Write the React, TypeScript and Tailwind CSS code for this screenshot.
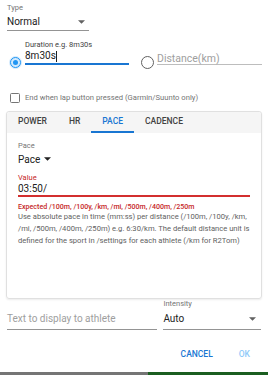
import React from "react";

const Caret = ({ className = "" }: { className?: string }) => (
  <svg width="7" height="4" viewBox="0 0 10 5" className={className}>
    <path d="M0 0 L5 5 L10 0 Z" fill="currentColor" />
  </svg>
);

const tabs = ["POWER", "HR", "PACE", "CADENCE"];

const App = () => {
  return (
    <div
      className="w-[268px] h-[375px] bg-white overflow-hidden flex flex-col text-[#212121]"
      style={{ fontFamily: "Roboto, 'Liberation Sans', sans-serif" }}
    >
      {/* Type select */}
      <div className="px-[7px] pt-[3px]">
        <div className="w-[82px]">
          <div className="text-[7.5px] leading-[10px] text-[#757575]">Type</div>
          <div className="flex items-center justify-between h-[18px] border-b border-[#949494] text-[10px] pr-[4px]">
            <span>Normal</span>
            <Caret className="text-[#616161]" />
          </div>
        </div>
      </div>

      {/* Duration / Distance */}
      <div className="flex items-start pl-[9px] mt-[9px]">
        <div className="mt-[16px] w-[13px] h-[13px] rounded-full bg-[#2196f3]/20 flex items-center justify-center">
          <div className="w-[11px] h-[11px] rounded-full border-[1.5px] border-[#2196f3] flex items-center justify-center">
            <div className="w-[5px] h-[5px] rounded-full bg-[#2196f3]" />
          </div>
        </div>
        <div className="ml-[3px] w-[104px]">
          <div className="text-[7.5px] leading-[9px] text-[#424242]">Duration e.g. 8m30s</div>
          <div className="h-[16px] border-b-2 border-[#1976d2] text-[10px] leading-[14px] flex items-center">
            8m30s<span className="w-px h-[11px] bg-[#212121]" />
          </div>
        </div>
        <div className="ml-[12px] mt-[16px] w-[13px] h-[13px] rounded-full border-[1.5px] border-[#616161]" />
        <div className="ml-[3px] w-[105px] pt-[13px]">
          <div className="h-[12px] border-b border-[#bdbdbd] text-[10.5px] leading-[12px] text-[#9e9e9e]">Distance(km)</div>
        </div>
      </div>

      {/* Checkbox */}
      <div className="flex items-center pl-[10px] mt-[23px] h-[12px]">
        <div className="w-[10px] h-[10px] rounded-[1.5px] border-[1.5px] border-[#757575]" />
        <span className="ml-[5px] text-[7.65px] text-[#757575]">End when lap button pressed (Garmin/Suunto only)</span>
      </div>

      {/* Card with tabs */}
      <div className="mx-[6px] mt-[7px] h-[188px] border border-[#e0e0e0] rounded-[3px] shadow-[0_1px_2px_rgba(0,0,0,0.08)] flex flex-col">
        <div className="flex h-[21px] bg-[#f5f5f5] rounded-t-[3px]">
          {tabs.map((t) => (
            <div
              key={t}
              className={
                t === "PACE"
                  ? "px-[11px] flex items-center text-[8.5px] font-medium text-[#1976d2] border-b-2 border-[#1976d2]"
                  : "px-[11px] flex items-center text-[8.5px] font-medium text-[#424242] border-b-2 border-transparent"
              }
            >
              {t}
            </div>
          ))}
        </div>
        <div className="px-[11px] pt-[8px]">
          <div className="text-[7.5px] leading-[9px] text-[#757575]">Pace</div>
          <div className="mt-[2px] flex items-center gap-[4px] h-[14px] text-[10px]">
            <span>Pace</span>
            <Caret className="text-[#212121]" />
          </div>
          <div className="mt-[7px] text-[7.5px] leading-[9px] text-[#c62828]">Value</div>
          <div className="h-[15px] border-b-2 border-[#d32f2f] text-[10px] leading-[13px] w-[232px]">03:50/</div>
          <div className="mt-[5px] text-[7.1px] leading-[9px] font-medium text-[#c62828]">
            Expected /100m, /100y, /km, /mi, /500m, /400m, /250m
          </div>
          <div className="text-[7.6px] leading-[12px] text-[#616161] whitespace-nowrap">
            Use absolute pace in time (mm:ss) per distance (/100m, /100y, /km,
            <br />
            /mi, /500m, /400m, /250m) e.g. 6:30/km. The default distance unit is
            <br />
            defined for the sport in /settings for each athlete (/km for R2Tom)
          </div>
        </div>
      </div>

      {/* Message + Intensity */}
      <div className="flex px-[7px] items-end">
        <div className="w-[151px] h-[22px] border-b border-[#949494] flex items-center text-[10px] text-[#9e9e9e]">
          Text to display to athlete
        </div>
        <div className="ml-[6px] w-[98px]">
          <div className="text-[7.5px] leading-[9px] text-[#757575]">Intensity</div>
          <div className="h-[22px] border-b border-[#949494] flex items-center justify-between text-[10px] pr-[5px]">
            <span>Auto</span>
            <Caret className="text-[#616161]" />
          </div>
        </div>
      </div>

      {/* Actions */}
      <div className="flex justify-end items-center h-[24px] mt-[12px] pr-[18px] text-[8.5px] font-medium">
        <span className="text-[#1976d2]">CANCEL</span>
        <span className="ml-[26px] text-[#90caf9]">OK</span>
      </div>

      <div className="mt-auto flex h-[3px]">
        <div className="w-[148px] bg-[#757575]" />
        <div className="flex-1 bg-[#1b5e20]" />
      </div>
    </div>
  );
};

export default App;
